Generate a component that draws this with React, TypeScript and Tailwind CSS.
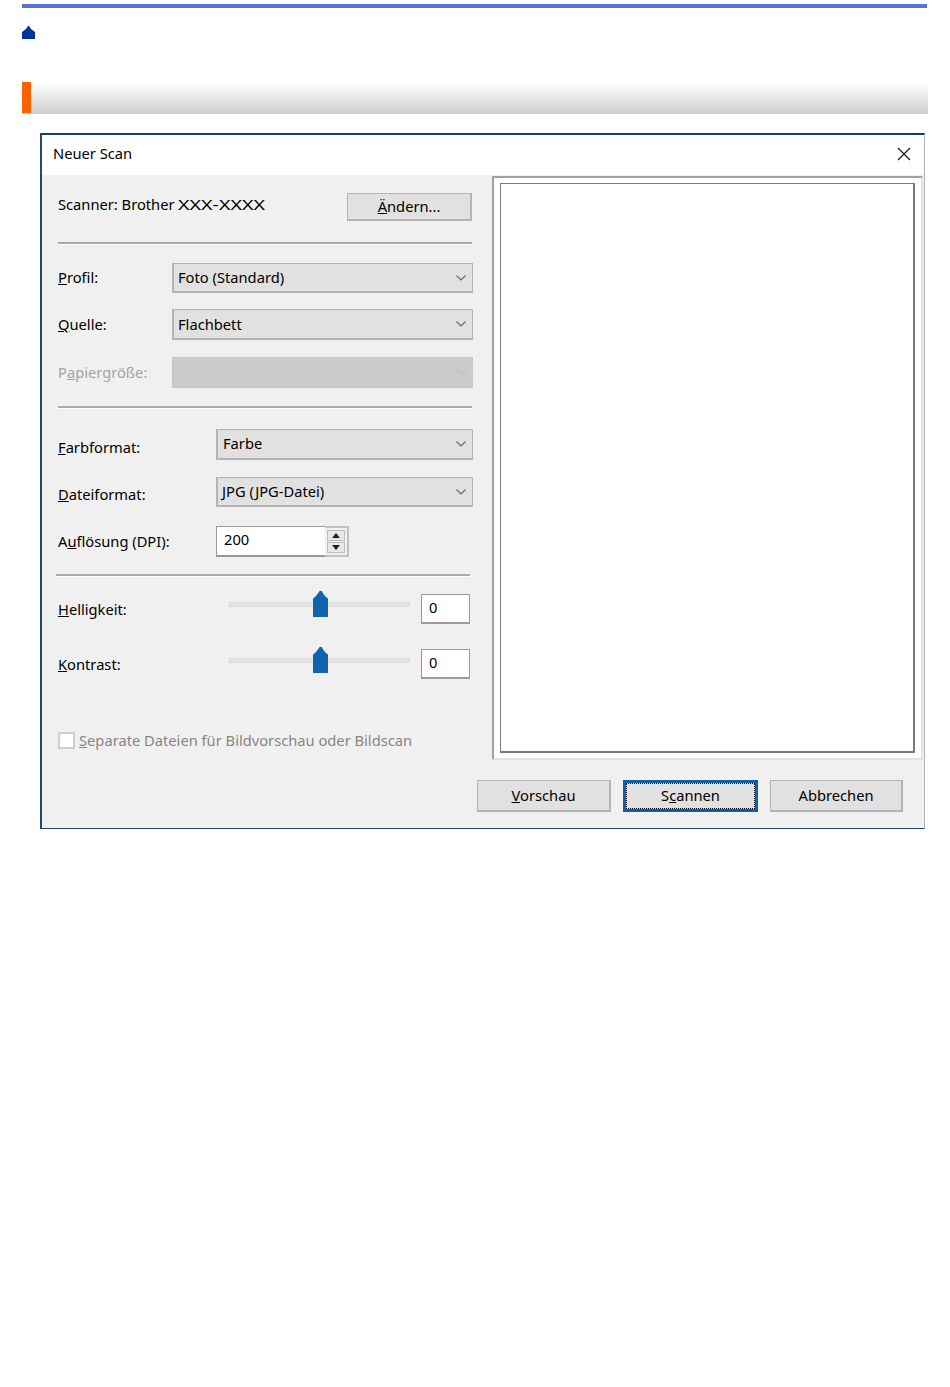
import { ReactNode } from "react"

function Chevron({ light }: { light?: boolean }) {
    return (
        <svg width="10" height="6" viewBox="0 0 10 6" className="absolute right-[6px] top-1/2 -translate-y-1/2">
            <path d="M0.5 0.5L5 5l4.5-4.5" fill="none" stroke={light ? "#bdbdbd" : "#666666"} strokeWidth="1.1" />
        </svg>
    )
}

function Select({ value, disabled, className }: { value?: string; disabled?: boolean; className: string }) {
    return (
        <div className={`relative flex items-center pl-[4px] border border-b-2 border-l-2 ${disabled ? "bg-[#cccccc] border-[#c6c6c6]" : "bg-[#e1e1e1] border-[#b4b4b4]"} ${className}`}>
            <span className="leading-none">{value}</span>
            <Chevron light={disabled} />
        </div>
    )
}

function Label({ children, className }: { children: ReactNode; className: string }) {
    return <div className={`flex items-center leading-none ${className}`}>{children}</div>
}

function Divider({ className }: { className: string }) {
    return <div className={`border-t-2 border-b border-t-[#a9a9a9] border-b-white ${className}`} />
}

function Slider() {
    return (
        <div className="relative w-[181px] h-[5px] bg-[#e3e3e3] border border-[#dadada]">
            <svg width="15" height="26" viewBox="0 0 15 26" className="absolute left-[83px] top-[-12px]">
                <path d="M0 26V7.5l2-1.5 3-3.5L6.5 0H9l1 2.5 3 3.5 2 1.5V26z" fill="#1063ad" />
            </svg>
        </div>
    )
}

function NumberBox() {
    return (
        <div className="w-[49px] h-[30px] bg-white border border-b-2 border-[#9a9a9a] flex items-center pl-[7px] pb-[2px]">
            <span className="leading-none">0</span>
        </div>
    )
}

function Button({ children, className }: { children: ReactNode; className: string }) {
    return (
        <div className={`flex items-center justify-center bg-[#e1e1e1] border border-b-2 border-r-2 border-[#b4b4b4] ${className}`}>
            {children}
        </div>
    )
}

export default function App() {
    return (
        <div className="w-[950px] h-[1387px] bg-white pl-[22px] pt-1 text-[14.7px] text-black" style={{ fontFamily: '"Noto Sans", sans-serif' }}>
            <div className="w-[905px] h-1 bg-[#5a6fdc]" />
            <svg width="13" height="13" viewBox="0 0 13 13" className="mt-[18px]">
                <path d="M0 13V6l4-3 2-3h1l2 3 4 3v7z" fill="#003399" />
            </svg>
            <div className="mt-[43px] w-[906px] h-[32px] flex bg-gradient-to-b from-white to-[#cfcfcf]">
                <div className="w-[9px] h-[31px] bg-[#ff6100]" />
            </div>

            <div className="mt-[19px] ml-[18px] w-[885px] h-[696px] flex flex-col border-t-2 border-l-2 border-b border-r border-t-[#1f3a5f] border-l-[#1f4a75] border-b-[#1f4a75] border-r-[#a9b4c9] bg-[#f0f0f0]">
                <div className="h-[40px] shrink-0 bg-white flex items-center justify-between pl-[11px] pr-[13px]">
                    <span className="pb-[4px]">Neuer Scan</span>
                    <svg width="14" height="14" viewBox="0 0 14 14" className="mb-[3px]">
                        <path d="M1 1l12 12M13 1L1 13" stroke="#1a1a1a" strokeWidth="1.3" fill="none" />
                    </svg>
                </div>

                <div className="flex flex-1">
                    <div className="w-[450px] shrink-0 pl-[14px] flex flex-col">
                        <div className="mt-[18px] h-[28px] flex items-center justify-between pr-[20px]">
                            <span className="leading-none pb-[6px] pl-[2px]">Scanner: Brother <span className="inline-block origin-left scale-x-[1.34]">XXX-XXXX</span></span>
                            <Button className="w-[125px] h-[28px]"><span><u>Ä</u>ndern...</span></Button>
                        </div>

                        <Divider className="mt-[21px] ml-[2px] w-[414px]" />

                        <div className="mt-[18px] ml-[2px] flex flex-col">
                            <div className="flex h-[30px]">
                                <Label className="w-[114px] pb-[1px]"><span><u>P</u>rofil:</span></Label>
                                <Select value="Foto (Standard)" className="w-[301px] h-[30px]" />
                            </div>
                            <div className="flex h-[31px] mt-[16px]">
                                <Label className="w-[114px]"><span><u>Q</u>uelle:</span></Label>
                                <Select value="Flachbett" className="w-[301px] h-[31px]" />
                            </div>
                            <div className="flex h-[31px] mt-[17px]">
                                <Label className="w-[114px] text-[#a5a5a5]"><span>P<u>a</u>piergröße:</span></Label>
                                <Select disabled className="w-[301px] h-[31px]" />
                            </div>
                        </div>

                        <Divider className="mt-[18px] ml-[2px] w-[414px]" />

                        <div className="mt-[20px] ml-[2px] flex flex-col">
                            <div className="flex h-[31px]">
                                <Label className="w-[158px] pt-[5px]"><span><u>F</u>arbformat:</span></Label>
                                <Select value="Farbe" className="w-[257px] h-[31px] pl-[5px] pb-[2px]" />
                            </div>
                            <div className="flex h-[30px] mt-[17px]">
                                <Label className="w-[158px] pt-[5px]"><span><u>D</u>ateiformat:</span></Label>
                                <Select value="JPG (JPG-Datei)" className="w-[257px] h-[30px]" />
                            </div>
                            <div className="flex h-[31px] mt-[19px]">
                                <Label className="w-[158px]"><span>A<u>u</u>flösung (DPI):</span></Label>
                                <div className="w-[133px] h-[31px] flex">
                                    <div className="w-[109px] bg-white border border-r-0 border-b-2 border-[#9a9a9a] flex items-center pl-[7px] pb-[3px]">
                                        <span className="leading-none">200</span>
                                    </div>
                                    <div className="w-[24px] flex flex-col gap-px p-[2px] bg-[#f0f0f0] border-2 border-l-0 border-[#c0c0c0]">
                                        <div className="flex-1 bg-[#e8e8e8] border border-[#bdbdbd] flex items-center justify-center">
                                            <svg width="8" height="5" viewBox="0 0 8 5"><path d="M0 5L4 0l4 5z" fill="#222222" /></svg>
                                        </div>
                                        <div className="flex-1 bg-[#e8e8e8] border border-[#bdbdbd] flex items-center justify-center">
                                            <svg width="8" height="5" viewBox="0 0 8 5"><path d="M0 0l4 5 4-5z" fill="#222222" /></svg>
                                        </div>
                                    </div>
                                </div>
                            </div>
                        </div>

                        <Divider className="mt-[17px] w-[414px]" />

                        <div className="mt-[17px] ml-[2px] flex flex-col gap-[25px]">
                            <div className="flex items-center h-[30px]">
                                <Label className="w-[171px]"><span><u>H</u>elligkeit:</span></Label>
                                <div className="w-[192px] pb-[9px]"><Slider /></div>
                                <NumberBox />
                            </div>
                            <div className="flex items-center h-[30px]">
                                <Label className="w-[171px]"><span><u>K</u>ontrast:</span></Label>
                                <div className="w-[192px] pb-[7px]"><Slider /></div>
                                <NumberBox />
                            </div>
                        </div>

                        <div className="mt-[53px] ml-[2px] flex items-center gap-[4px] text-[#8c8484]">
                            <div className="w-[17px] h-[17px] bg-white border-2 border-[#cfcfcf]" />
                            <span className="leading-none"><u>S</u>eparate Dateien für Bildvorschau oder Bildscan</span>
                        </div>
                    </div>

                    <div className="flex-1 flex flex-col">
                        <div className="mt-px mr-[1px] h-[584px] border-2 border-t-[#a0a0a0] border-l-[#a0a0a0] border-r-[#e3e3e3] border-b-[#e3e3e3] pt-[5px] px-[6px] pb-[5px] bg-white">
                            <div className="w-full h-full bg-white border-2 border-t border-l border-[#7a7a7a]" />
                        </div>
                        <div className="mt-[20px] ml-[-15px] flex gap-[12px]">
                            <Button className="w-[134px] h-[32px]"><span><u>V</u>orschau</span></Button>
                            <div className="w-[135px] h-[32px] border-[3px] border-[#0f5fa8] bg-[#e1e1e1] flex items-center justify-center">
                                <div className="w-[129px] h-[26px] border border-dotted border-black flex items-center justify-center pb-[2px]">
                                    <span>S<u>c</u>annen</span>
                                </div>
                            </div>
                            <Button className="w-[133px] h-[32px]">Abbrechen</Button>
                        </div>
                    </div>
                </div>
            </div>
        </div>
    )
}
